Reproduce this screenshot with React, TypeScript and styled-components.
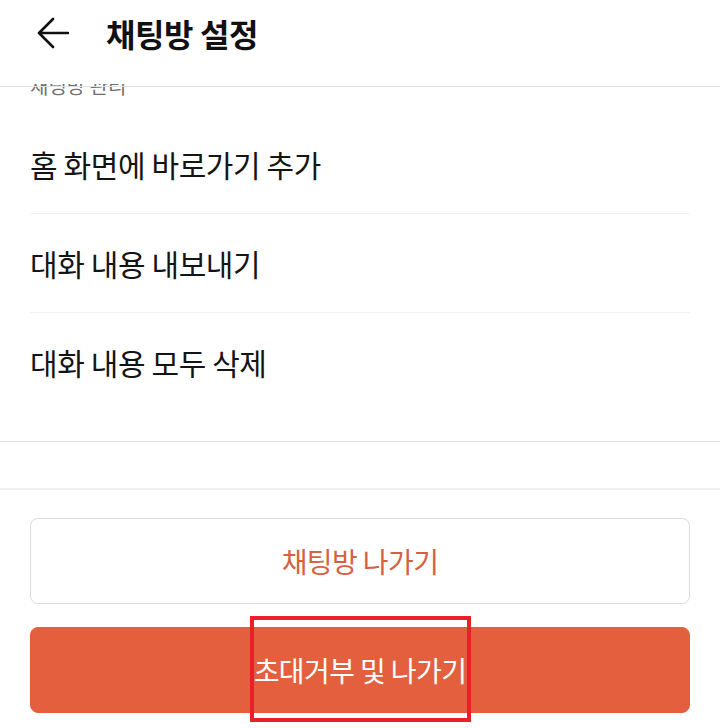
import React from 'react'
import styled, { createGlobalStyle } from 'styled-components'

const GlobalStyle = createGlobalStyle`
    html, body {
        margin: 0;
        padding: 0;
        background: #ffffff;
    }
    body {
        font-family: 'Noto Sans CJK KR', 'Noto Sans', sans-serif;
    }
`

const ACCENT = '#e35f3e'

const Page = styled.div`
    position: relative;
    width: 720px;
    height: 728px;
    overflow: hidden;
    background: #ffffff;
    display: flex;
    flex-direction: column;
`

const Header = styled.header`
    position: relative;
    z-index: 2;
    height: 84px;
    flex-shrink: 0;
    display: flex;
    align-items: center;
    padding: 0 0 18px 36px;
    box-sizing: border-box;
    background: #ffffff;

    &::after {
        content: '';
        position: absolute;
        left: 0;
        right: 0;
        top: 86px;
        height: 1px;
        background: #e2e2e2;
    }
`

const BackButton = styled.button`
    border: 0;
    background: none;
    padding: 0;
    width: 34px;
    height: 34px;
    display: flex;
    align-items: center;
    justify-content: center;
    cursor: pointer;
`

const Title = styled.h1`
    margin: 0 0 0 36px;
    font-size: 32px;
    font-weight: 700;
    color: #111111;
    letter-spacing: -0.4px;
`

const Body = styled.div`
    display: flex;
    flex-direction: column;
`

const SectionLabel = styled.div`
    margin-top: -10px;
    padding-left: 30px;
    height: 24px;
    line-height: 24px;
    font-size: 20px;
    color: #6f6f6f;
`

const Menu = styled.ul`
    list-style: none;
    margin: 17px 30px 0;
    padding: 0 0 29px;
`

const MenuItem = styled.li<{ last?: boolean }>`
    height: 98px;
    display: flex;
    align-items: center;
    border-bottom: 1px solid ${p => (p.last ? 'transparent' : '#f2f2f2')};
    font-size: 30px;
    color: #141414;
    letter-spacing: -0.4px;
`

const Divider = styled.div<{ thick?: boolean }>`
    height: ${p => (p.thick ? '2px' : '1px')};
    background: ${p => (p.thick ? '#efefef' : '#e3e3e3')};
`

const Spacer = styled.div`
    height: 46px;
`

const Footer = styled.div`
    display: flex;
    flex-direction: column;
    gap: 23px;
    padding: 28px 30px 0;
`

const ActionButton = styled.button<{ primary?: boolean }>`
    height: 86px;
    border-radius: 8px;
    border: 1px solid ${p => (p.primary ? ACCENT : '#dddddd')};
    background: ${p => (p.primary ? ACCENT : '#ffffff')};
    color: ${p => (p.primary ? '#ffffff' : '#d5613f')};
    font-family: inherit;
    font-size: 28px;
    letter-spacing: -0.6px;
    cursor: pointer;
`

const Highlight = styled.div`
    position: absolute;
    left: 250px;
    top: 616px;
    width: 221px;
    height: 106px;
    box-sizing: border-box;
    border: 4px solid #e8202a;
    pointer-events: none;
`

const BackIcon = () => (
    <svg width='32' height='32' viewBox='0 0 32 32' fill='none'>
        <path
            d='M31 16H3M16 2L2 16l14 14'
            stroke='#111111'
            strokeWidth='2.6'
            strokeLinecap='round'
            strokeLinejoin='round'
        />
    </svg>
)

const items = ['홈 화면에 바로가기 추가', '대화 내용 내보내기', '대화 내용 모두 삭제']

const App = () => {
    return (
        <Page>
            <GlobalStyle />
            <Header>
                <BackButton aria-label='뒤로'>
                    <BackIcon />
                </BackButton>
                <Title>채팅방 설정</Title>
            </Header>
            <Body>
                <SectionLabel>채팅방 관리</SectionLabel>
                <Menu>
                    {items.map((item, i) => (
                        <MenuItem key={item} last={i === items.length - 1}>
                            {item}
                        </MenuItem>
                    ))}
                </Menu>
                <Divider />
                <Spacer />
                <Divider thick />
                <Footer>
                    <ActionButton>채팅방 나가기</ActionButton>
                    <ActionButton primary>초대거부 및 나가기</ActionButton>
                </Footer>
            </Body>
            <Highlight />
        </Page>
    )
}

export default App
